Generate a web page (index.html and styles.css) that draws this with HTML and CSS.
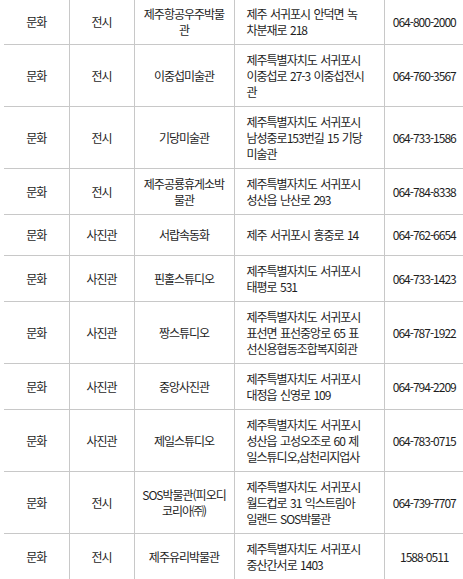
FILE: index.html
```html
<!DOCTYPE html>
<html lang="ko">
<head>
<meta charset="utf-8">
<title>서귀포시 문화시설</title>
<link rel="stylesheet" href="styles.css">
</head>
<body>
<div class="wrap">
<table class="list">
<colgroup>
<col class="c1"><col class="c2"><col class="c3"><col class="c4"><col class="c5">
</colgroup>
<tbody>
<tr><td>문화</td><td>전시</td><td>제주항공우주박물<br>관</td><td class="addr">제주 서귀포시 안덕면 녹<br>차분재로 218</td><td>064-800-2000</td></tr>
<tr><td>문화</td><td>전시</td><td>이중섭미술관</td><td class="addr">제주특별자치도 서귀포시<br>이중섭로 27-3 이중섭전시<br>관</td><td>064-760-3567</td></tr>
<tr><td>문화</td><td>전시</td><td>기당미술관</td><td class="addr">제주특별자치도 서귀포시<br>남성중로153번길 15 기당<br>미술관</td><td>064-733-1586</td></tr>
<tr><td>문화</td><td>전시</td><td>제주공룡휴게소박<br>물관</td><td class="addr">제주특별자치도 서귀포시<br>성산읍 난산로 293</td><td>064-784-8338</td></tr>
<tr><td>문화</td><td>사진관</td><td>서랍속동화</td><td class="addr">제주 서귀포시 홍중로 14</td><td>064-762-6654</td></tr>
<tr><td>문화</td><td>사진관</td><td>핀홀스튜디오</td><td class="addr">제주특별자치도 서귀포시<br>태평로 531</td><td>064-733-1423</td></tr>
<tr><td>문화</td><td>사진관</td><td>짱스튜디오</td><td class="addr">제주특별자치도 서귀포시<br>표선면 표선중앙로 65 표<br>선신용협동조합복지회관</td><td>064-787-1922</td></tr>
<tr><td>문화</td><td>사진관</td><td>중앙사진관</td><td class="addr">제주특별자치도 서귀포시<br>대정읍 신영로 109</td><td>064-794-2209</td></tr>
<tr><td>문화</td><td>사진관</td><td>제일스튜디오</td><td class="addr">제주특별자치도 서귀포시<br>성산읍 고성오조로 60 제<br>일스튜디오,삼천리지업사</td><td>064-783-0715</td></tr>
<tr><td>문화</td><td>전시</td><td>SOS박물관(피오디<br>코리아㈜)</td><td class="addr">제주특별자치도 서귀포시<br>월드컵로 31 익스트림아<br>일랜드 SOS박물관</td><td>064-739-7707</td></tr>
<tr><td>문화</td><td>전시</td><td>제주유리박물관</td><td class="addr">제주특별자치도 서귀포시<br>중산간서로 1403</td><td>1588-0511</td></tr>
</tbody>
</table>
</div>
</body>
</html>
```
FILE: styles.css
```css
html, body {
  margin: 0;
  padding: 0;
  background: #fff;
  overflow: hidden;
}
.wrap {
  padding-left: 4px;
  width: 470px;
}
.list {
  margin-top: -2px;
  width: 460px;
  table-layout: fixed;
  border-collapse: collapse;
  font-family: "Noto Sans CJK KR", "Noto Sans", sans-serif;
  font-size: 12px;
  letter-spacing: -1px;
  word-spacing: 1px;
  line-height: 16px;
  color: #1e1e1e;
}
.c1 { width: 65px; }
.c2 { width: 65px; }
.c3 { width: 100px; }
.c4 { width: 150px; }
.c5 { width: 80px; }
.list tr {
  height: 41px;
  border-top: 1px solid #c8c8c8;
  border-bottom: 1px solid #c8c8c8;
}
.list td {
  padding: 6.5px 0;
  text-align: center;
  vertical-align: middle;
  white-space: nowrap;
  border-left: 1px solid #c8c8c8;
}
.list td:first-child {
  border-left: none;
}
.list td.addr {
  text-align: left;
  padding-left: 12px;
}
```
